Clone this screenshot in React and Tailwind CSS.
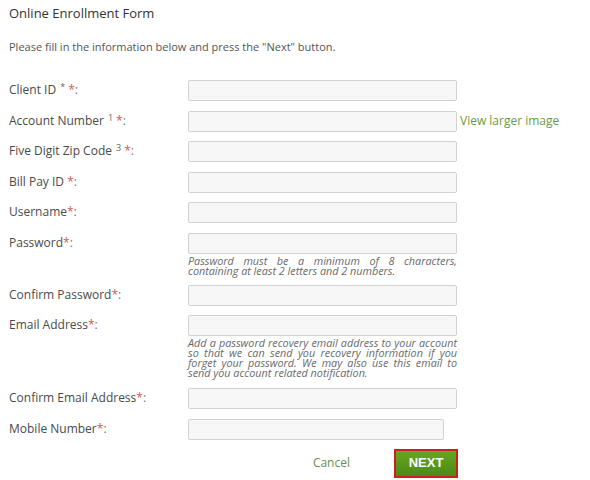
import React from 'react'

const font = { fontFamily: '"Open Sans", "DejaVu Sans", sans-serif' }

function Label({ text, sup, star = true }) {
  return (
    <div className="w-[179px] shrink-0 pt-[2px] text-[12px] leading-[16px] text-[#4a4a4a]">
      {text}
      {sup && <span className="inline-block ml-[4px] mr-[3px] text-[9px] leading-[8px] text-[#666] align-top relative top-[1px]">{sup}</span>}
      {star && <span className="text-[#d05a5a]">*</span>}
      <span className="text-[#777]">:</span>
    </div>
  )
}

function Row({ label, sup, hint, extra, narrow, mb = 'mb-[9.5px]' }) {
  return (
    <div className={`flex ${mb}`}>
      <Label text={label} sup={sup} />
      <div className={narrow ? 'w-[256px]' : 'w-[269px]'}>
        <input className="block w-full h-[21px] bg-[#f7f7f7] border border-[#d2d2d2] rounded-[2px] outline-none" />
        {hint && (
          <p className="mt-[2px] text-[10.8px] leading-[10px] italic text-[#6a6a6a] text-justify [text-align-last:left]">{hint}</p>
        )}
      </div>
      {extra && <div className="ml-[3px] pt-[2px] text-[12px] leading-[16px] text-[#6b9a3e] whitespace-nowrap">{extra}</div>}
    </div>
  )
}

export default function App() {
  return (
    <div className="w-[590px] h-[480px] bg-white pl-[9px] overflow-hidden" style={font}>
      <h1 className="pt-[4px] text-[13px] leading-[18px] text-[#333]">Online Enrollment Form</h1>
      <p className="mt-[17px] text-[11px] leading-[16px] text-[#555]">Please fill in the information below and press the "Next" button.</p>
      <div className="mt-[25px]">
        <Row label="Client ID" sup="*" />
        <Row label="Account Number" sup="1" extra="View larger image" />
        <Row label="Five Digit Zip Code" sup="3" />
        <Row label="Bill Pay ID " />
        <Row label="Username" />
        <Row
          label="Password"
          hint="Password must be a minimum of 8 characters, containing at least 2 letters and 2 numbers."
          mb="mb-[9px]"
        />
        <Row label="Confirm Password" />
        <Row
          label="Email Address"
          hint="Add a password recovery email address to your account so that we can send you recovery information if you forget your password. We may also use this email to send you account related notification."
          mb="mb-[10px]"
        />
        <Row label="Confirm Email Address" />
        <Row label="Mobile Number" narrow mb="mb-0" />
      </div>
      <div className="ml-[179px] w-[270px] mt-[9px] flex justify-end items-center gap-[44px]">
        <span className="text-[12px] text-[#6b8e4e]">Cancel</span>
        <button className="w-[64px] h-[29px] border-2 border-[#cc1f1f] bg-gradient-to-b from-[#67a623] to-[#4c8a14] text-white text-[13px] font-bold" style={{ fontFamily: '"Liberation Sans", Arial, sans-serif' }}>
          NEXT
        </button>
      </div>
    </div>
  )
}
